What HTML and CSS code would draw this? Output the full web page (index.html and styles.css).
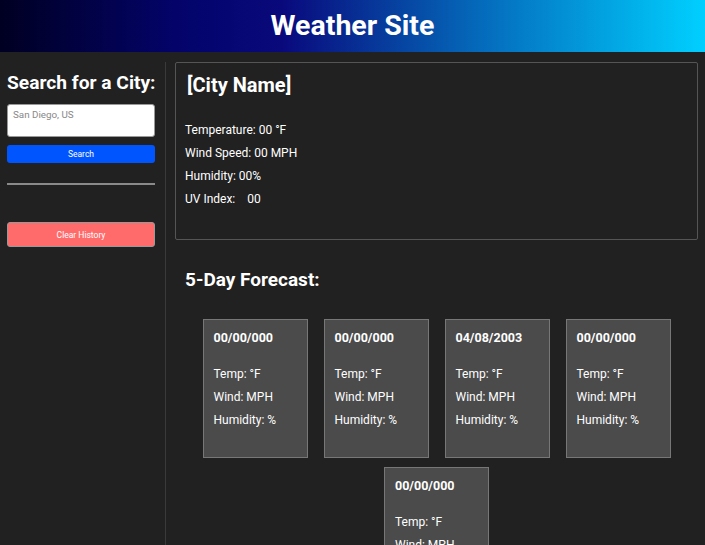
FILE: index.html
```html
<!DOCTYPE html>
<html lang="en">
<head>
    <meta charset="UTF-8">
    <meta name="viewport" content="width=device-width, initial-scale=1.0">
    <title>Weather Site</title>
    <link rel="stylesheet" href="styles.css">
</head>
<body>
    <header class="site-header">
        <h1>Weather Site</h1>
    </header>

    <div class="page">
        <!-- search side -->
        <aside class="sidebar">
            <h2>Search for a City:</h2>
            <textarea class="city-input" placeholder="San Diego, US"></textarea>
            <button class="btn btn-search">Search</button>
            <hr class="divider">
            <div class="history"></div>
            <button class="btn btn-clear">Clear History</button>
        </aside>

        <main class="content">
            <section class="current">
                <h2>[City Name]</h2>
                <p>Temperature: 00 °F</p>
                <p>Wind Speed: 00 MPH</p>
                <p>Humidity: 00%</p>
                <p>UV Index: &nbsp;&nbsp; 00</p>
            </section>

            <h2 class="forecast-title">5-Day Forecast:</h2>
            <div class="forecast">
                <div class="day-card">
                    <h3>00/00/000</h3>
                    <p>Temp: °F</p>
                    <p>Wind: MPH</p>
                    <p>Humidity: %</p>
                </div>
                <div class="day-card">
                    <h3>00/00/000</h3>
                    <p>Temp: °F</p>
                    <p>Wind: MPH</p>
                    <p>Humidity: %</p>
                </div>
                <div class="day-card">
                    <h3>04/08/2003</h3>
                    <p>Temp: °F</p>
                    <p>Wind: MPH</p>
                    <p>Humidity: %</p>
                </div>
                <div class="day-card">
                    <h3>00/00/000</h3>
                    <p>Temp: °F</p>
                    <p>Wind: MPH</p>
                    <p>Humidity: %</p>
                </div>
                <div class="day-card">
                    <h3>00/00/000</h3>
                    <p>Temp: °F</p>
                    <p>Wind: MPH</p>
                    <p>Humidity: %</p>
                </div>
            </div>
        </main>
    </div>
</body>
</html>
```

FILE: styles.css
```css
body {
    margin: 0;
    font-family: Roboto, "Liberation Sans", sans-serif;
    background-color: #212121;
    color: #fff;
}
.site-header {
    height: 52px;
    display: flex;
    align-items: center;
    justify-content: center;
    background: linear-gradient(90deg, #000022 0%, #03036a 25%, #09097c 40%, #0560b4 65%, #00d0ff 100%);
}
.site-header h1 {
    margin: 0 0 1px;
    font-size: 28.5px;
    font-weight: 700;
}
.page {
    display: flex;
}
.sidebar {
    width: 149px;
    flex: none;
    padding: 1px 9px 0 7px;
    margin-top: 10px;
    border-right: 1px solid #3a3a3a;
    display: flex;
    flex-direction: column;
    min-height: 500px;
}
.sidebar h2 {
    margin: 8px 0 10px;
    font-size: 19.2px;
    font-weight: 700;
    white-space: nowrap;
}
.city-input {
    box-sizing: border-box;
    height: 33px;
    width: 148px;
    padding: 4px 5px;
    border: 1px solid #999;
    border-radius: 3px;
    font-family: inherit;
    font-size: 9.8px;
    resize: none;
}
.city-input::placeholder {
    color: #888;
}
.btn {
    box-sizing: border-box;
    width: 148px;
    border-radius: 3px;
    color: #fff;
    font-family: inherit;
    font-size: 8.5px;
}
.btn-search {
    margin-top: 8px;
    height: 18px;
    background-color: #0055ff;
    border: none;
}
.divider {
    width: 148px;
    margin: 20px 0 0;
    border: none;
    border-top: 2px solid #8a8a8a;
}
.history {
    height: 37px;
}
.btn-clear {
    height: 25px;
    background-color: #ff6b6b;
    border: 1px solid #999;
}
.content {
    flex: 1;
    padding: 10px 7px 0 9px;
}
.current {
    height: 176px;
    padding: 0 9px;
    border: 1px solid #555;
    border-radius: 2px;
}
.current h2 {
    margin: 10px 0 26px 2px;
    font-size: 20px;
    font-weight: 700;
}
.current p {
    margin: 0 0 9px;
    font-size: 12px;
    line-height: 14px;
}
.forecast-title {
    margin: 28px 0 28px 10px;
    font-size: 19px;
    font-weight: 700;
}
.forecast {
    display: flex;
    flex-wrap: wrap;
    justify-content: center;
    gap: 9px 16px;
    padding: 0 22px;
}
.day-card {
    box-sizing: border-box;
    width: 105px;
    height: 139px;
    padding: 0 10px;
    background-color: #4b4b4b;
    border: 1px solid #777;
}
.day-card h3 {
    margin: 10px 0 22px;
    font-size: 12.5px;
    font-weight: 700;
}
.day-card p {
    margin: 0 0 9px;
    font-size: 12px;
    line-height: 14px;
}
```
